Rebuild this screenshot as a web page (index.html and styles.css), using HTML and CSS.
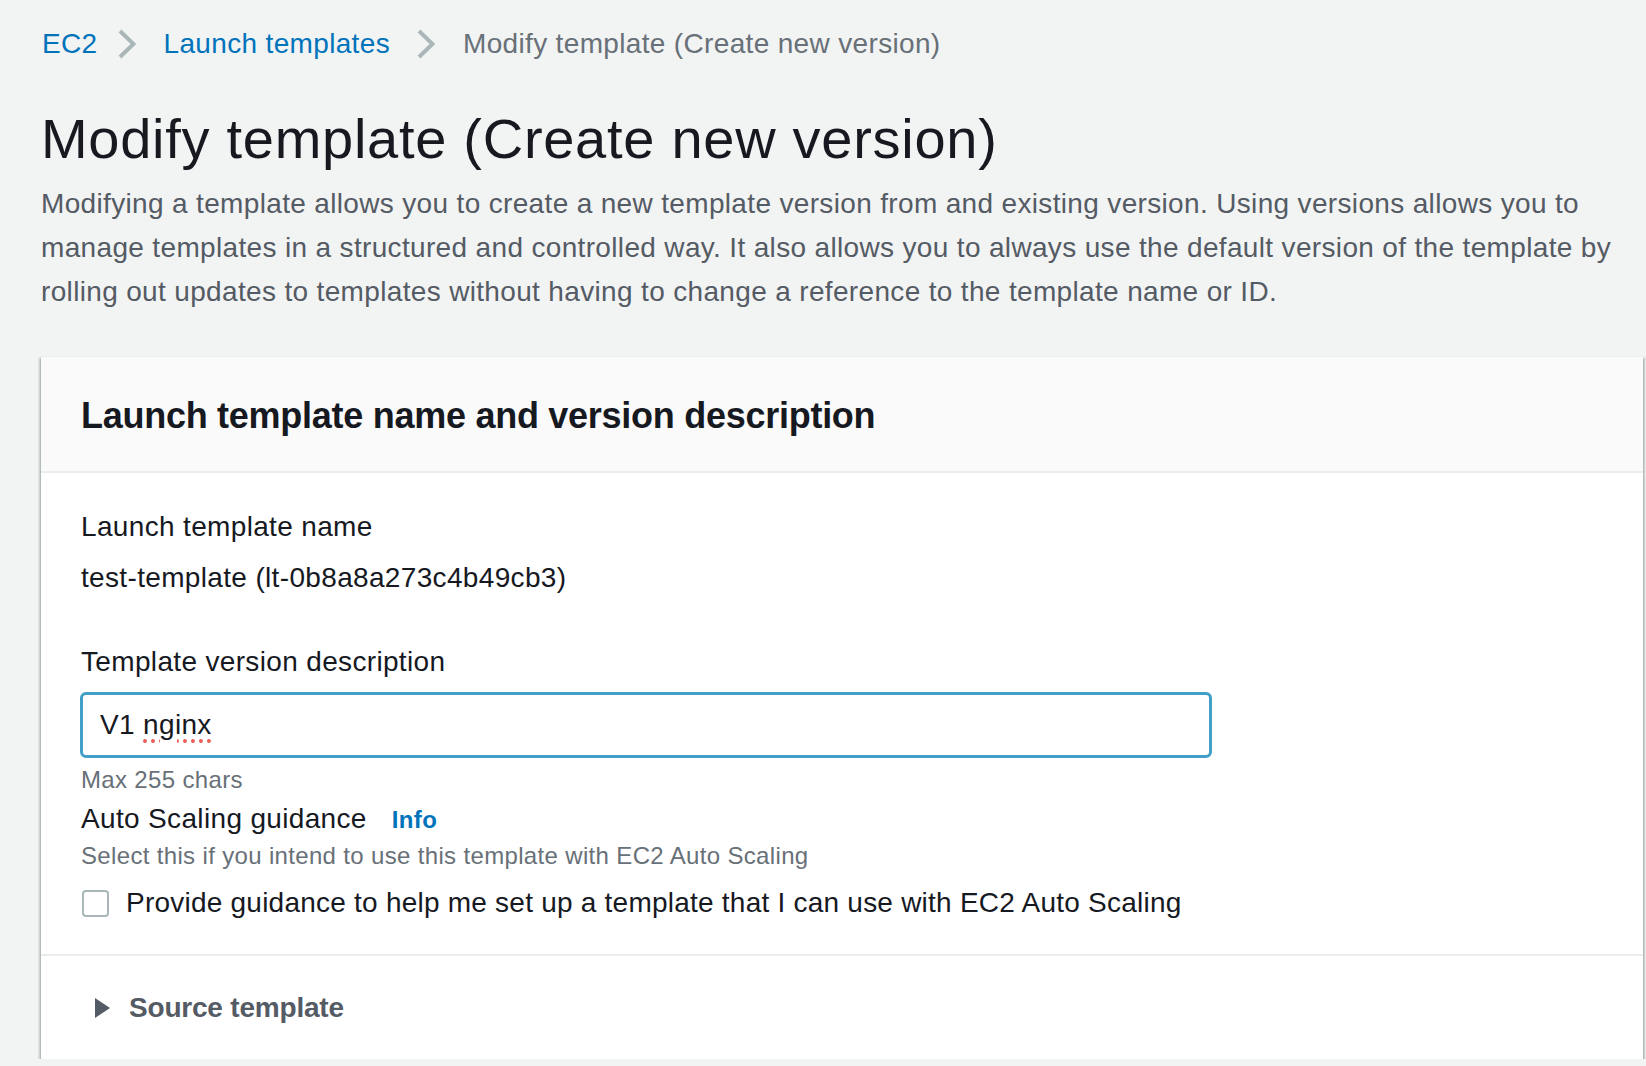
FILE: index.html
```html
<!DOCTYPE html>
<html lang="en">
<head>
<meta charset="utf-8">
<title>Modify template (Create new version)</title>
<link rel="stylesheet" href="styles.css">
</head>
<body>
<main class="page">
  <nav class="breadcrumbs">
    <a class="crumb-link" href="#">EC2</a>
    <span class="crumb-sep crumb-sep-first"><svg width="18" height="30" viewBox="0 0 18 30"><path d="M2 2 L15.5 15 L2 28" fill="none" stroke="#aab7b8" stroke-width="4"/></svg></span>
    <a class="crumb-link" href="#">Launch templates</a>
    <span class="crumb-sep"><svg width="18" height="30" viewBox="0 0 18 30"><path d="M2 2 L15.5 15 L2 28" fill="none" stroke="#aab7b8" stroke-width="4"/></svg></span>
    <span class="crumb-current">Modify template (Create new version)</span>
  </nav>

  <h1 class="title">Modify template (Create new version)</h1>
  <p class="description">Modifying a template allows you to create a new template version from and existing version. Using versions allows you to manage templates in a structured and controlled way. It also allows you to always use the default version of the template by rolling out updates to templates without having to change a reference to the template name or ID.</p>

  <section class="card">
    <header class="card-header">
      <h2 class="card-title">Launch template name and version description</h2>
    </header>
    <div class="card-body">
      <div class="field-label">Launch template name</div>
      <div class="field-value">test-template (lt-0b8a8a273c4b49cb3)</div>

      <div class="field-label field-gap">Template version description</div>
      <div class="text-input"><span>V1 </span><span class="misspelled">nginx</span></div>
      <div class="constraint">Max 255 chars</div>

      <div class="field-label label-row">Auto Scaling guidance <a class="info-link" href="#">Info</a></div>
      <div class="hint">Select this if you intend to use this template with EC2 Auto Scaling</div>
      <label class="checkbox-row">
        <span class="checkbox"></span>
        <span class="checkbox-text">Provide guidance to help me set up a template that I can use with EC2 Auto Scaling</span>
      </label>
    </div>
    <div class="card-footer">
      <svg class="caret" width="17" height="20" viewBox="0 0 17 20"><path d="M1 0 L16 10 L1 20 Z" fill="#545b64"/></svg>
      <span class="expander-title">Source template</span>
    </div>
  </section>
</main>
</body>
</html>
```

FILE: styles.css
```css
html, body {
  margin: 0;
  padding: 0;
  background: #f2f3f3;
}

body {
  font-family: "Liberation Sans", Arial, sans-serif;
  font-size: 28px;
  line-height: 44px;
  color: #16191f;
  letter-spacing: 0.34px;
}

.page {
  padding: 22px 3px 0 41px;
}

.breadcrumbs {
  display: flex;
  align-items: center;
  height: 44px;
  padding-left: 1px;
}

.crumb-link {
  color: #0073bb;
  text-decoration: none;
}

.crumb-sep {
  display: flex;
  align-items: center;
  width: 18px;
  margin: 0 28px 0 27px;
}

.crumb-sep-first {
  margin-left: 20px;
}

.crumb-current {
  color: #687078;
}

.title {
  margin: 33px 0 0 0;
  font-size: 56px;
  line-height: 80px;
  font-weight: 400;
  letter-spacing: 0.72px;
  color: #16191f;
}

.description {
  margin: 3px 0 0 0;
  color: #545b64;
  max-width: 1590px;
}

.card {
  margin-top: 42px;
  background: #ffffff;
  border-top: 1px solid #eaeded;
  box-shadow: 0 2px 2px 0 rgba(0, 28, 36, 0.35), 2px 2px 2px 0 rgba(0, 28, 36, 0.18), -2px 2px 2px 0 rgba(0, 28, 36, 0.18);
}

.card-header {
  background: #fafafa;
  border-bottom: 2px solid #eaeded;
  padding: 37px 40px 33px 40px;
}

.card-title {
  margin: 0;
  font-size: 36px;
  line-height: 44px;
  font-weight: 700;
  letter-spacing: -0.27px;
  color: #16191f;
}

.card-body {
  padding: 32px 40px 29px 40px;
  border-bottom: 2px solid #eaeded;
}

.field-label {
  color: #16191f;
}

.field-value {
  margin-top: 7px;
}

.field-gap {
  margin-top: 40px;
}

.text-input {
  margin-top: 8px;
  margin-left: -1px;
  width: 1132px;
  height: 66px;
  box-sizing: border-box;
  border: 3px solid #42a0c8;
  border-radius: 6px;
  padding: 0 17px;
  display: flex;
  align-items: center;
  white-space: pre;
  background: #ffffff;
}

.misspelled {
  text-decoration-line: underline;
  text-decoration-style: dotted;
  text-decoration-color: #ec5f57;
  text-decoration-thickness: 4px;
  text-underline-offset: 5px;
}

.constraint {
  margin-top: 7px;
  font-size: 24px;
  line-height: 30px;
  color: #687078;
}

.label-row {
  margin-top: 2px;
  display: flex;
  align-items: baseline;
}

.info-link {
  margin-left: 25px;
  font-size: 24px;
  font-weight: 700;
  color: #0073bb;
  text-decoration: none;
}

.hint {
  font-size: 24px;
  line-height: 30px;
  color: #687078;
  margin-top: -1px;
}

.checkbox-row {
  margin-top: 10px;
  display: flex;
  align-items: center;
  height: 44px;
}

.checkbox {
  width: 27px;
  height: 27px;
  box-sizing: border-box;
  border: 2px solid #aab7b8;
  border-radius: 4px;
  margin-left: 1px;
  flex: none;
}

.checkbox-text {
  margin-left: 17px;
  letter-spacing: 0.23px;
}

.card-footer {
  padding: 30px 40px 29px 40px;
  display: flex;
  align-items: center;
  height: 44px;
}

.caret {
  margin-left: 13px;
  flex: none;
}

.expander-title {
  margin-left: 18px;
  font-weight: 700;
  letter-spacing: -0.2px;
  color: #545b64;
}
```
